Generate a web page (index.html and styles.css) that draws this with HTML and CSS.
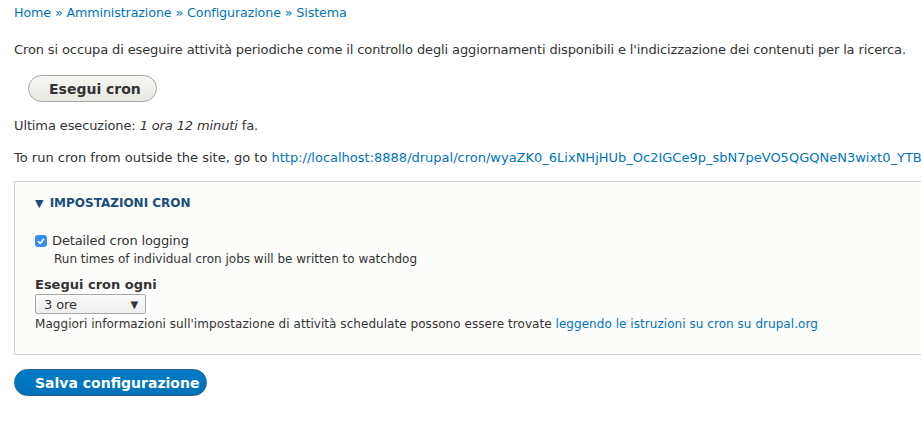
FILE: index.html
```html
<!DOCTYPE html>
<html lang="it">
<head>
  <meta charset="UTF-8" />
  <title>Cron</title>
  <link rel="stylesheet" href="styles.css">
</head>
<body>
  <div class="page">
    <nav class="breadcrumb">
      <a href="#">Home</a> » <a href="#">Amministrazione</a> » <a href="#">Configurazione</a> » <a href="#">Sistema</a>
    </nav>

    <p class="intro">Cron si occupa di eseguire attività periodiche come il controllo degli aggiornamenti disponibili e l'indicizzazione dei contenuti per la ricerca.</p>

    <div class="run-row">
      <button class="btn">Esegui cron</button>
    </div>

    <p class="last-run">Ultima esecuzione: <em>1 ora 12 minuti</em> fa.</p>

    <p class="cron-url">To run cron from outside the site, go to <a href="#">http://localhost:8888/drupal/cron/wyaZK0_6LixNHjHUb_Oc2IGCe9p_sbN7peVO5QGQNeN3wixt0_YTB3</a></p>

    <!-- cron settings -->
    <fieldset class="settings">
      <div class="legend"><span class="arrow">▼</span> IMPOSTAZIONI CRON</div>

      <div class="check-item">
        <label class="check-label"><span class="check"><svg width="10" height="10" viewBox="0 0 10 10"><path d="M2 5.2 L4.2 7.4 L8 2.8" fill="none" stroke="#fff" stroke-width="1.6"/></svg></span>Detailed cron logging</label>
        <div class="desc">Run times of individual cron jobs will be written to watchdog</div>
      </div>

      <div class="select-item">
        <div class="field-label">Esegui cron ogni</div>
        <div class="select">3 ore <span class="select-arrow">▼</span></div>
        <div class="help">Maggiori informazioni sull'impostazione di attività schedulate possono essere trovate <a href="#">leggendo le istruzioni su cron su drupal.org</a></div>
      </div>
    </fieldset>

    <button class="btn btn-primary">Salva configurazione</button>
  </div>
</body>
</html>
```

FILE: styles.css
```css
* {
  box-sizing: border-box;
}

body {
  margin: 0;
  background: #fff;
  color: #333;
  font-family: "DejaVu Sans", Verdana, sans-serif;
  font-size: 13px;
  letter-spacing: -0.12px;
  overflow: hidden;
}

a {
  color: #0074bd;
  text-decoration: none;
}

.page {
  padding: 4px 0 0 14px;
  white-space: nowrap;
}

.breadcrumb {
  font-size: 12.7px;
  line-height: 18px;
  color: #0074bd;
}

.intro {
  margin: 19px 0 0;
  line-height: 18px;
}

.run-row {
  padding: 16px 0 0 14px;
}

.btn {
  font-family: "DejaVu Sans", Verdana, sans-serif;
  font-size: 14px;
  font-weight: bold;
  letter-spacing: 0;
  color: #333;
  background: linear-gradient(#f6f6f3, #e8e8e3);
  border: 1px solid #a6a6a6;
  border-radius: 20px;
  height: 27px;
  padding: 0 20px;
  cursor: pointer;
}

.run-row .btn {
  width: 129px;
}

.last-run {
  margin: 15px 0 0;
  line-height: 18px;
}

.cron-url {
  margin: 14px 0 0;
  letter-spacing: 0;
  line-height: 18px;
}

.settings {
  margin: 14px 0 0;
  padding: 12px 20px 21px;
  border: 1px solid #ccc;
  border-right: none;
  border-radius: 2px 0 0 2px;
  background: #fcfcfa;
  min-width: 0;
}

.legend {
  font-size: 12px;
  font-weight: bold;
  color: #1a4d7a;
  letter-spacing: 0;
  line-height: 18px;
}

.arrow {
  font-size: 11px;
  margin-right: 2px;
}

.check-item {
  margin-top: 19px;
}

.check-label {
  display: flex;
  align-items: center;
  line-height: 18px;
}

.check {
  width: 12px;
  height: 12px;
  border-radius: 3px;
  background: #3b8cf0;
  margin-right: 5px;
  display: flex;
  align-items: center;
  justify-content: center;
}

.desc {
  font-size: 12px;
  letter-spacing: 0;
  padding-left: 19px;
  line-height: 18px;
}

.select-item {
  margin-top: 8px;
}

.field-label {
  font-weight: bold;
  letter-spacing: 0;
  line-height: 17px;
}

.select {
  display: flex;
  align-items: center;
  justify-content: space-between;
  width: 111px;
  height: 20px;
  margin-top: 1px;
  padding: 0 7px 0 8px;
  border: 1px solid #a8a8a8;
  border-radius: 2px;
  background: linear-gradient(#fbfbfb, #eeeeee);
  font-size: 13px;
}

.select-arrow {
  font-size: 10px;
}

.help {
  font-size: 12px;
  letter-spacing: 0.05px;
  line-height: 18px;
  margin-top: 1px;
}

.btn-primary {
  margin-top: 14px;
  width: 193px;
  background: linear-gradient(#007bc6, #0071b8);
  border-color: #1e5c90;
  color: #fff;
}
```
